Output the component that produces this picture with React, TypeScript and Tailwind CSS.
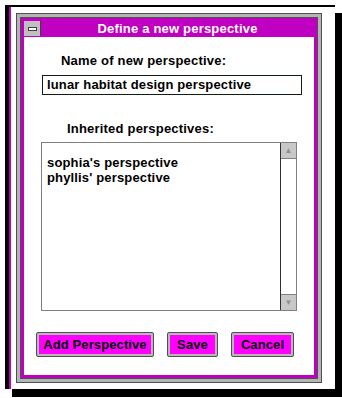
export default function App() {
  const font = { fontFamily: '"Liberation Sans", Arial, sans-serif' };
  return (
    <div className="w-[342px] h-[398px] bg-white pt-[5px] pl-[5px]" style={font}>
      {/* outer frame with hard shadow */}
      <div className="w-[330px] h-[384px] border-l-4 border-t-2 border-black shadow-[7px_8px_0_0_#000] flex">
        <div className="flex-1 border-l-2 border-[#c000c0] pl-[5px] pt-[6px]">
          {/* window */}
          <div className="w-[306px] h-[370px] border border-[#505050] bg-[#b4b4b4] p-[3px]">
            <div className="h-full border border-[#505050]">
              <div className="h-full border-[3px] border-[#c000c0] bg-white flex flex-col">
                {/* title bar */}
                <div className="h-[16px] flex shrink-0 border-b border-[#c000c0]">
                  <div className="w-[17px] h-full bg-[#c0c0c0] border-r border-[#404040] flex items-center justify-center">
                    <div className="w-[9px] h-[4px] bg-white border border-[#404040]" />
                  </div>
                  <div className="flex-1 bg-[#c000c0] text-white text-[13px] tracking-[0.2px] font-bold leading-[15px] text-center">
                    Define a new perspective
                  </div>
                </div>

                <div className="mt-[17px] ml-[37px] text-[13px] tracking-[0.2px] font-bold leading-[14px] text-black">
                  Name of new perspective:
                </div>
                <div className="mt-[7px] ml-[18px] w-[260px] h-[20px] border border-[#102010] pl-[4px] text-[13px] tracking-[0.15px] font-bold leading-[18px] text-black">
                  lunar habitat design perspective
                </div>

                <div className="mt-[27px] ml-[43px] text-[13px] tracking-[0.2px] font-bold leading-[14px] text-black">
                  Inherited perspectives:
                </div>
                <div className="mt-[6px] ml-[17px] w-[256px] h-[169px] border border-[#808080] flex">
                  <div className="flex-1 pt-[12px] pl-[5px] text-[13px] tracking-[0.15px] font-bold leading-[15px] text-black">
                    <div>sophia's perspective</div>
                    <div>phyllis' perspective</div>
                  </div>
                  <div className="w-[16px] border-l border-[#303030] flex flex-col justify-between">
                    <div className="h-[16px] bg-[#c8c8c8] border-b border-[#808080] flex items-center justify-center text-[#909090] text-[8px] leading-none">▲</div>
                    <div className="h-[16px] bg-[#c8c8c8] border-t border-[#808080] flex items-center justify-center text-[#909090] text-[8px] leading-none">▼</div>
                  </div>
                </div>

                <div className="mt-[21px] ml-[12px] flex gap-[13px]">
                  {[
                    { t: "Add Perspective", w: "w-[118px]" },
                    { t: "Save", w: "w-[51px]" },
                    { t: "Cancel", w: "w-[63px]" },
                  ].map((b) => (
                    <div key={b.t} className={`${b.w} h-[25px] rounded-[2px] border border-[#505050] bg-[#b8b8b8] p-[2px]`}>
                      <div className="h-full bg-[#ff00ff] flex items-center justify-center text-[13px] tracking-[0.1px] font-bold text-black">
                        {b.t}
                      </div>
                    </div>
                  ))}
                </div>
              </div>
            </div>
          </div>
        </div>
      </div>
    </div>
  );
}
